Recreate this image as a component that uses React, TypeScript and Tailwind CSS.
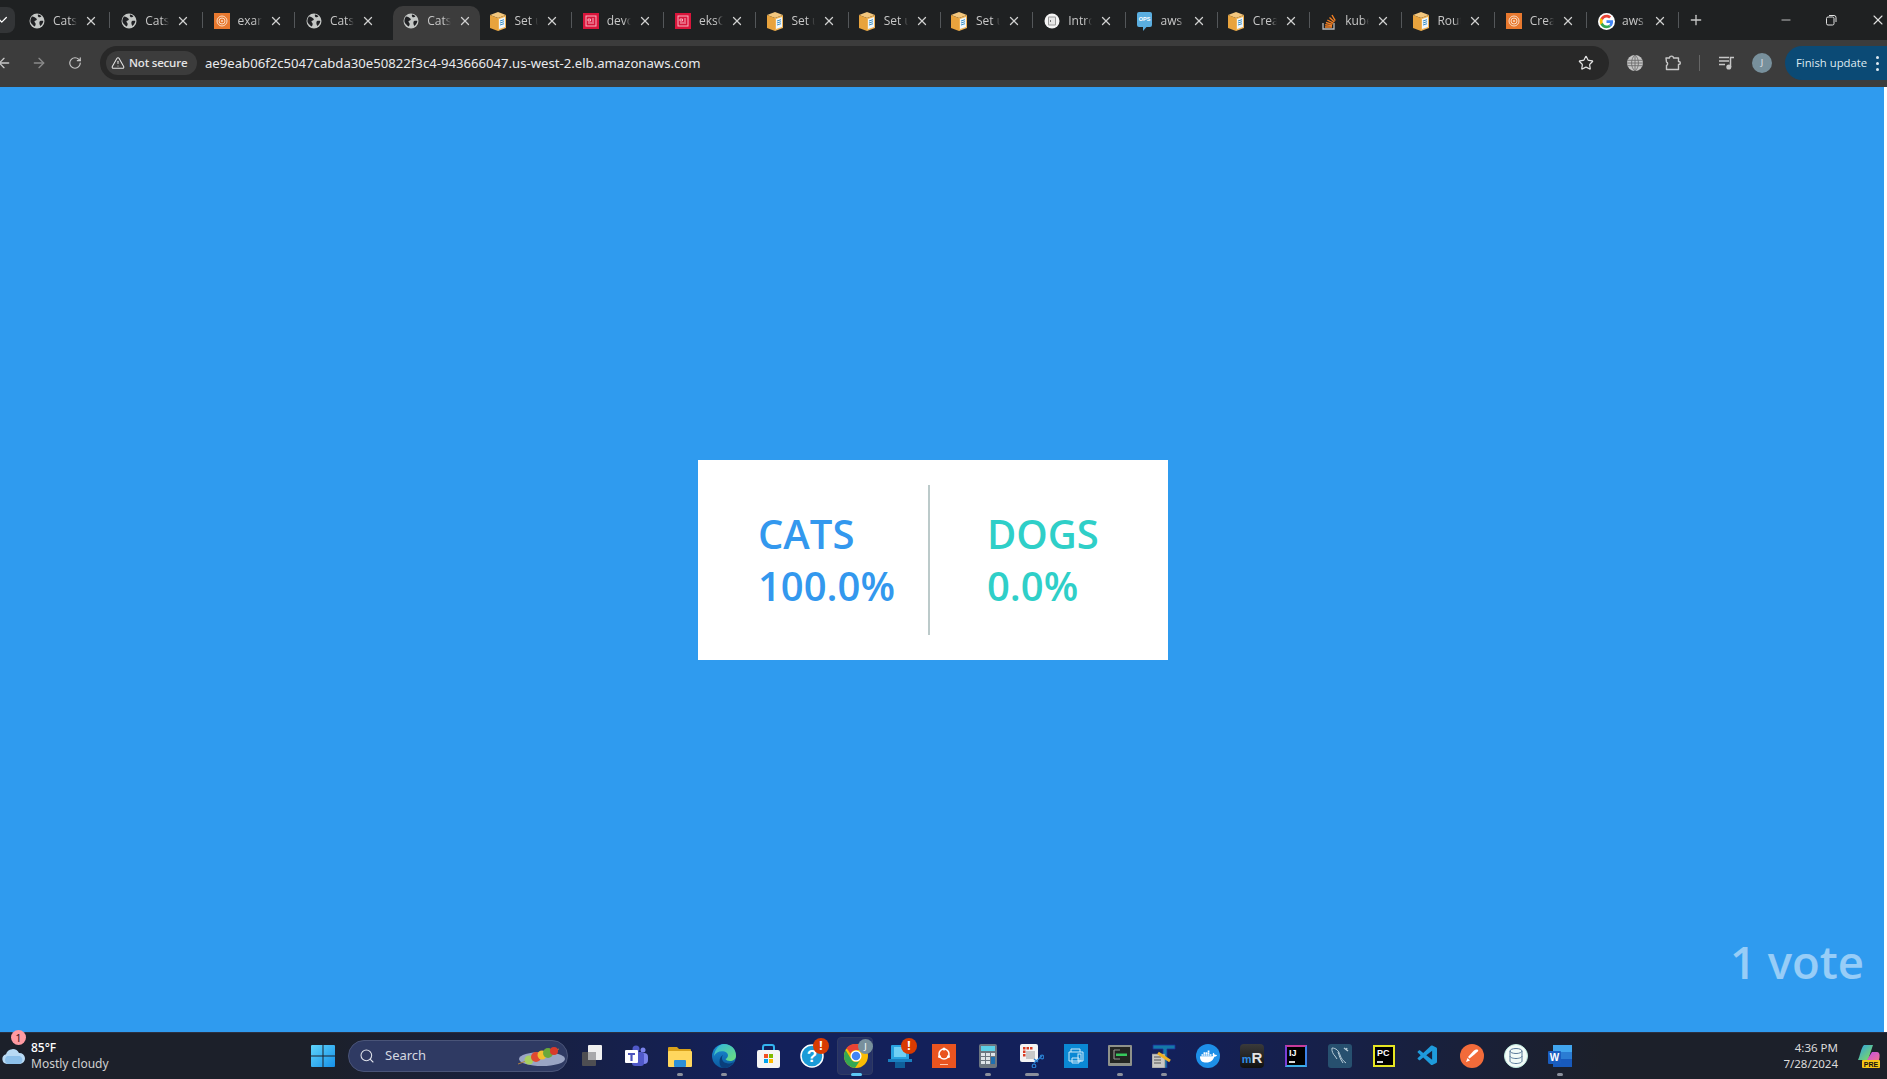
import React from "react";
import { ArrowLeft, ArrowRight, RotateCw, TriangleAlert, Star, Minus, Plus, X, Search, Check } from "lucide-react";
import { SiDocker } from "react-icons/si";
import { VscVscode } from "react-icons/vsc";

const GlobeFav = () => (
  <svg width="16" height="16" viewBox="0 0 16 16">
    <circle cx="8" cy="8" r="7.500" fill="#c4c7c5" />
    <path d="M3 3.500c2 .3 3.500 1 4.600 2.300.8 1-.4 1.800-1.500 2-1 .2-.6 1.500.2 2.200.8.8.3 2-.5 3.600-1.700-1.200-3.400-2.600-4.300-4.600C1.200 7 1.800 5 3 3.500z" fill="#202124" />
    <path d="M9 1.500c1.300.2 2.500.8 3.400 1.700-.6 1-1.800 1.200-2.600 1-.8-.3-1.200-1.500-.8-2.700zM11 8c1.200-.5 2.500-.5 3.300 0-.2 2-1.300 3.800-3 4.900-.8-1-1.500-3.800-.3-4.900z" fill="#202124" />
  </svg>
);
const BoxFav = () => (
  <svg width="17" height="20" viewBox="0 0 17 20">
    <polygon points="0,4 8,1 16,4 8,7" fill="#f3c77e" />
    <polygon points="0,4 8,7 8,20 0,17" fill="#e8a33d" />
    <polygon points="8,7 16,4 16,17 8,20" fill="#f1b354" />
    <polygon points="9,8 15,6 15,16 9,18" fill="#eef6fb" />
    <path d="M10 10l4-1.300M10 12l4-1.300M10 14l4-1.300" stroke="#3c8fc4" strokeWidth="1" />
  </svg>
);
const SwirlFav = () => (
  <svg width="16" height="16" viewBox="0 0 16 16">
    <rect width="16" height="16" fill="#e8792f" />
    <circle cx="8" cy="8" r="5" fill="none" stroke="#fbdcc4" strokeWidth="1" />
    <circle cx="8" cy="8" r="3" fill="none" stroke="#fbdcc4" strokeWidth="1" />
    <circle cx="8" cy="8" r="1" fill="#fbdcc4" />
  </svg>
);
const RedFav = () => (
  <svg width="16" height="16" viewBox="0 0 16 16">
    <rect width="16" height="16" fill="#d9153b" />
    <rect x="3" y="3" width="10" height="10" fill="none" stroke="#f7b5c2" strokeWidth="1" />
    <path d="M5 6h2.500v2H5zM9 6h2M9 8h2M5 10h6" stroke="#f7b5c2" strokeWidth="1" fill="none" />
  </svg>
);
const IntroFav = () => (
  <svg width="16" height="16" viewBox="0 0 16 16">
    <circle cx="8" cy="8" r="7.500" fill="#f4f4f4" />
    <rect x="4" y="3.500" width="8" height="9" rx="1" fill="#9a9a9a" />
    <rect x="5" y="4.500" width="6" height="7" fill="#e8e8e8" />
    <path d="M6 7l1 1-1 1" stroke="#555" strokeWidth=".8" fill="none" />
  </svg>
);
const OpsFav = () => (
  <svg width="15" height="19" viewBox="0 0 15 19">
    <path d="M2 0h11a2 2 0 0 1 2 2v11a2 2 0 0 1-2 2H9.500L6 19v-4H2a2 2 0 0 1-2-2V2a2 2 0 0 1 2-2z" fill="#5aaee0" />
    <text x="7.500" y="9" textAnchor="middle" fontSize="5.500" fontWeight="700" fill="#fff" fontFamily="'Liberation Sans',sans-serif">OPS</text>
  </svg>
);
const StackFav = () => (
  <svg width="16" height="18" viewBox="0 0 16 18">
    <path d="M2 11v6h11v-6" fill="none" stroke="#bcbbbb" strokeWidth="1.300" />
    <path d="M4 15h7M4.200 12.800l6.800.8M4.900 10.500l6.600 1.900M6.300 8l6 3.200M8.500 5.500l4.900 4.500M11 3l3.200 5.600" stroke="#f48024" strokeWidth="1.400" />
  </svg>
);
const GoogleFav = () => (
  <svg width="17" height="17" viewBox="0 0 48 48">
    <circle cx="24" cy="24" r="24" fill="#fff" />
    <path fill="#EA4335" d="M24 12.500c3 0 5.500 1 7.500 2.900l5.500-5.500C33.700 6.800 29.300 5 24 5 16.600 5 10.200 9.200 7.100 15.400l6.500 5C15.100 15.800 19.200 12.500 24 12.500z" />
    <path fill="#4285F4" d="M42.500 24.500c0-1.300-.1-2.500-.3-3.800H24v7.200h10.400c-.5 2.400-1.800 4.400-3.800 5.700l6 4.700c3.500-3.200 5.900-8 5.900-13.800z" />
    <path fill="#FBBC05" d="M13.600 28.600c-.5-1.400-.7-3-.7-4.600s.3-3.200.7-4.600l-6.500-5C5.800 17 5 20.400 5 24s.8 7 2.100 9.600l6.500-5z" />
    <path fill="#34A853" d="M24 43c5.200 0 9.500-1.700 12.600-4.700l-6-4.700c-1.700 1.100-3.900 1.800-6.600 1.800-4.800 0-8.900-3.300-10.400-7.700l-6.500 5C10.200 38.800 16.600 43 24 43z" />
  </svg>
);

type T = { icon: React.ReactNode; title: string; active?: boolean };
const tabs: T[] = [
  { icon: <GlobeFav />, title: "Cats" },
  { icon: <GlobeFav />, title: "Cats" },
  { icon: <SwirlFav />, title: "example" },
  { icon: <GlobeFav />, title: "Cats" },
  { icon: <GlobeFav />, title: "Cats", active: true },
  { icon: <BoxFav />, title: "Set up" },
  { icon: <RedFav />, title: "devops" },
  { icon: <RedFav />, title: "eksCtl" },
  { icon: <BoxFav />, title: "Set up" },
  { icon: <BoxFav />, title: "Set up" },
  { icon: <BoxFav />, title: "Set up" },
  { icon: <IntroFav />, title: "Introduction" },
  { icon: <OpsFav />, title: "aws eks" },
  { icon: <BoxFav />, title: "Create" },
  { icon: <StackFav />, title: "kubectl" },
  { icon: <BoxFav />, title: "Route" },
  { icon: <SwirlFav />, title: "Create" },
  { icon: <GoogleFav />, title: "aws eks" },
];

function Tab({ t, showSep }: { t: T; showSep: boolean }) {
  return (
    <div className={t.active ? "relative ml-[5px] flex h-[34px] w-[87.3px] shrink-0 items-center rounded-t-[10px] bg-[#3c3c3c] pb-[4px]" : "relative flex h-[34px] w-[92.3px] shrink-0 items-center pb-[4px]"}>
      <div className="flex w-[34px] shrink-0 items-center justify-center pl-[2px]">{t.icon}</div>
      <span className="w-[24px] shrink-0 overflow-hidden whitespace-nowrap text-[12px] leading-[16px] text-[#c7c7c7] [mask-image:linear-gradient(to_right,black_70%,transparent)]">{t.title}</span>
      <X className="ml-[7px] shrink-0 text-[#d0d0d0]" size={14} strokeWidth={2.2} />
      {showSep && <div className="absolute right-[1px] top-[6px] h-[16px] w-px bg-[#54575a]" />}
    </div>
  );
}

const Box = ({ children, dot, wide, active }: { children: React.ReactNode; dot?: boolean; wide?: boolean; active?: boolean }) => (
  <div className="relative flex h-[46px] w-[44px] shrink-0 items-center justify-center">
    {active && <div className="absolute left-[3px] top-[4px] h-[38px] w-[36px] rounded-[4px] border border-[#2f3a63] bg-[#ffffff14]" />}
    <div className="relative flex items-center justify-center">{children}</div>
    {dot && <div className={active ? "absolute bottom-[3px] h-[3px] w-[11px] rounded-full bg-[#5cc7f5]" : wide ? "absolute bottom-[3px] h-[3px] w-[14px] rounded-full bg-[#8b8f9c]" : "absolute bottom-[3px] h-[3px] w-[6px] rounded-full bg-[#8b8f9c]"} />}
  </div>
);

const Alert = () => (
  <div className="absolute right-[-5px] top-[-6px] flex h-[16px] w-[16px] items-center justify-center rounded-full bg-[#d83b01] text-[12px] font-bold leading-none text-white">!</div>
);

export default function App() {
  return (
    <div className="flex h-screen w-full flex-col overflow-hidden bg-white font-['Open_Sans','Noto_Sans',sans-serif]">
      {/* tab strip */}
      <div className="flex h-[40px] shrink-0 items-end bg-[#1f2122]">
        <div className="mb-[7px] flex h-[26px] w-[15px] shrink-0 items-center justify-start overflow-hidden rounded-r-[8px] bg-[#333537]">
          <Check size={10} strokeWidth={3} className="ml-[-2px] shrink-0 text-white" />
        </div>
        <div className="ml-[4px] flex">
          {tabs.map((t, i) => (
            <Tab key={i} t={t} showSep={!t.active && !(tabs[i + 1] && tabs[i + 1].active)} />
          ))}
        </div>
        <div className="mb-[9px] ml-[8px] flex h-[22px] items-center">
          <Plus size={16} strokeWidth={2} className="text-[#c7c7c7]" />
        </div>
        <div className="mb-[9px] ml-auto flex h-[22px] shrink-0 items-center text-[#e0e0e0]">
          <Minus size={14} strokeWidth={1.4} className="shrink-0" />
          <svg className="ml-[32px] shrink-0" width="12" height="12" viewBox="0 0 12 12" fill="none" stroke="currentColor" strokeWidth="1">
            <rect x="1.500" y="3" width="7.500" height="8" rx="1.500" />
            <path d="M4 1.500h5a2 2 0 0 1 2 2V8" />
          </svg>
          <X className="ml-[33px] mr-[1px] shrink-0" size={16} strokeWidth={1.6} />
        </div>
      </div>

      {/* toolbar */}
      <div className="flex h-[47px] shrink-0 items-center bg-[#3c3c3c] pb-[1px] text-[#c7c7c7]">
        <ArrowLeft size={16} strokeWidth={2} className="ml-[-4px] shrink-0" />
        <ArrowRight size={16} strokeWidth={2} className="ml-[19px] shrink-0 text-[#8a8a8a]" />
        <RotateCw size={14} strokeWidth={2} className="ml-[21px] shrink-0" />
        <div className="ml-[18px] flex h-[34px] w-[1509px] shrink-0 items-center rounded-full bg-[#282828] pl-[6px]">
          <div className="flex h-[24px] w-[91px] shrink-0 items-center rounded-full bg-[#3c3c3c] pl-[5px]">
            <TriangleAlert size={14} strokeWidth={1.8} className="shrink-0 text-[#e3e3e3]" />
            <span className="ml-[4px] whitespace-nowrap text-[11.500px] font-semibold tracking-[-0.2px] text-[#e3e3e3]">Not secure</span>
          </div>
          <span className="ml-[8px] whitespace-nowrap pt-[1px] font-['Noto_Sans',sans-serif] text-[13.150px] text-[#e8eaed]">ae9eab06f2c5047cabda30e50822f3c4-943666047.us-west-2.elb.amazonaws.com</span>
          <Star size={16} strokeWidth={1.8} className="ml-auto mr-[15px] shrink-0 text-[#e3e3e3]" />
        </div>
        <svg className="ml-[18px] shrink-0" width="16" height="16" viewBox="0 0 16 16">
          <circle cx="8" cy="8" r="8" fill="#c4c4c4" />
          <path d="M0 5.300h16M0 8h16M0 10.700h16M8 0v16M8 0C5.500 2 4.600 5 4.600 8s.9 6 3.400 8M8 0c2.500 2 3.400 5 3.400 8s-.9 6-3.400 8" stroke="#6e6e6e" strokeWidth=".9" fill="none" />
        </svg>
        <svg className="ml-[22px] shrink-0" width="17" height="16" viewBox="0 0 17 16" fill="none" stroke="#c7c7c7" strokeWidth="1.400" strokeLinejoin="round">
          <path d="M1 3h3.500c0-2.500 4-2.500 4 0H13.500v3.500c2.500 0 2.500 3 0 3V14.500H1.500V10.500c1.500-.5 1.500-3 0-3.500z" />
        </svg>
        <div className="ml-[17px] h-[16px] w-px shrink-0 bg-[#666]" />
        <svg className="ml-[19px] shrink-0" width="16" height="14" viewBox="0 0 16 14" fill="none" stroke="#c7c7c7" strokeWidth="1.500">
          <path d="M0 1.500h10M0 5h10M0 8.500h6" />
          <path d="M11.500 11V1.500H15" />
          <circle cx="9.800" cy="11" r="1.800" fill="#c7c7c7" />
        </svg>
        <div className="ml-[17px] flex h-[20px] w-[20px] shrink-0 items-center justify-center rounded-full bg-[#78909c] text-[9px] text-[#e8eaed]">J</div>
        <div className="ml-[13px] flex h-[34px] flex-1 items-center rounded-l-full bg-[#0b4a75] pl-[11px] text-[#dfeaf2]">
          <span className="whitespace-nowrap text-[11.300px]">Finish update</span>
          <div className="ml-[9px] flex flex-col gap-[3px]">
            <div className="h-[3px] w-[3px] rounded-full bg-[#dfeaf2]" />
            <div className="h-[3px] w-[3px] rounded-full bg-[#dfeaf2]" />
            <div className="h-[3px] w-[3px] rounded-full bg-[#dfeaf2]" />
          </div>
        </div>
      </div>

      {/* page */}
      <div className="flex min-h-0 flex-1">
        <main className="relative flex flex-1 items-center justify-center bg-[#2f9bef] pr-[18px]">
          <div className="flex h-[200px] w-[470px] items-center bg-white font-semibold">
            <div className="h-[150px] w-[232px] shrink-0 border-r-2 border-[#bccaca] pl-[60px] pt-[23px] text-[40px] leading-[52px] text-[#3398ee]">
              <div>CATS</div>
              <div>100.0%</div>
            </div>
            <div className="h-[150px] flex-1 pl-[57px] pt-[23px] text-[40px] leading-[52px] text-[#2fcfc8]">
              <div>DOGS</div>
              <div>0.0%</div>
            </div>
          </div>
          <div className="absolute bottom-[39px] right-[20px] text-[45.500px] font-semibold leading-[64px] text-white/50">1 vote</div>
        </main>
        <div className="w-[3px] shrink-0 bg-white" />
      </div>

      {/* taskbar */}
      <div className="flex h-[47px] shrink-0 items-center border-t border-[#2c3040] bg-[linear-gradient(to_right,#1c202a_0%,#1c202a_17%,#13205a_40%,#13205a_62%,#1c202a_85%,#1c202a_100%)] font-['Noto_Sans',sans-serif]">
        <div className="relative flex w-[301px] shrink-0 items-center">
          <svg className="ml-[1px] shrink-0" width="25" height="18" viewBox="0 0 25 18">
            <path d="M6 17a5 5 0 0 1-1-9.800A7 7 0 0 1 18 6a5.500 5.500 0 0 1 1 11z" fill="#b9daf4" />
            <path d="M6 17a5 5 0 0 1 0-8h13a4.500 4.500 0 0 1 0 8z" fill="#8dc0ea" />
          </svg>
          <div className="absolute left-[11px] top-[-10px] flex h-[15px] w-[15px] items-center justify-center rounded-full bg-[#ff9aa2] text-[11px] leading-none text-[#3a1518]">1</div>
          <div className="ml-[5px] leading-[16px]">
            <div className="text-[12px] font-medium text-white">85°F</div>
            <div className="text-[12px] text-[#d0d0d0]">Mostly cloudy</div>
          </div>
        </div>
        {/* start */}
        <Box>
          <svg width="24" height="24" viewBox="0 0 24 24">
            <defs>
              <linearGradient id="w" x1="0" y1="0" x2="1" y2="1">
                <stop offset="0" stopColor="#5fd4fb" />
                <stop offset="1" stopColor="#1590e8" />
              </linearGradient>
            </defs>
            <path d="M1 1h10.500v10.500H0V2a1 1 0 0 1 1-1zM12.500 1H23a1 1 0 0 1 1 1v9.500H12.500zM0 12.500h11.500V23H1a1 1 0 0 1-1-1zM12.500 12.500H24V22a1 1 0 0 1-1 1H12.500z" fill="url(#w)" />
          </svg>
        </Box>
        <div className="ml-[3px] flex h-[32px] w-[220px] shrink-0 items-center rounded-full border border-[#4a5478] bg-[#2f3a63] pl-[10px]">
          <Search size={16} strokeWidth={1.6} className="shrink-0 text-[#dfe2ea]" />
          <span className="ml-[10px] text-[13px] text-[#d5d8e0]">Search</span>
          <svg className="ml-auto mr-[2px] shrink-0" width="50" height="24" viewBox="0 0 50 24">
            <ellipse cx="27" cy="15" rx="23" ry="7" fill="#9aa5c4" />
            <path d="M3 20L44 5" stroke="#b08040" strokeWidth="1" />
            <circle cx="14" cy="16" r="4.500" fill="#a8d060" />
            <circle cx="21" cy="13" r="5" fill="#e04a30" />
            <circle cx="27" cy="11" r="4.500" fill="#f0c030" />
            <circle cx="33" cy="9" r="5" fill="#6aa83a" />
            <circle cx="39" cy="7" r="4" fill="#d83a2a" />
          </svg>
        </div>
        <div className="ml-[2px] flex">
          <Box>
            <svg width="20" height="22" viewBox="0 0 20 22">
              <rect x="0" y="7" width="14" height="14" rx="1" fill="#4e4e52" />
              <rect x="6" y="0" width="14" height="15" rx="1" fill="#f0f0f0" />
              <rect x="6" y="7" width="8" height="8" fill="#a9a9ab" />
            </svg>
          </Box>
          <Box>
            <svg width="24" height="22" viewBox="0 0 24 22">
              <circle cx="19" cy="5" r="2.500" fill="#7b83eb" />
              <rect x="13" y="8" width="11" height="11" rx="4" fill="#7b83eb" />
              <circle cx="12" cy="4" r="3.500" fill="#5059c9" />
              <rect x="8" y="7" width="12" height="14" rx="3" fill="#5059c9" />
              <rect x="1" y="5" width="13" height="13" rx="1" fill="#fff" />
              <path d="M4 8h7v2H8.600v6H6.400v-6H4z" fill="#4b53bc" />
            </svg>
          </Box>
          <Box dot>
            <svg width="24" height="21" viewBox="0 0 24 21">
              <path d="M0 2a1 1 0 0 1 1-1h8l2 2h11a1 1 0 0 1 1 1v3H0z" fill="#d9a21b" />
              <rect x="0" y="5" width="24" height="16" rx="1" fill="#ffd75e" />
              <rect x="6" y="14" width="12" height="7" rx="1" fill="#2b8fd8" />
            </svg>
          </Box>
          <Box dot>
            <svg width="24" height="24" viewBox="0 0 24 24">
              <defs>
                <linearGradient id="e1" x1="0" y1="0" x2="0" y2="1">
                  <stop offset="0" stopColor="#1a8fd8" />
                  <stop offset="1" stopColor="#0c5a9e" />
                </linearGradient>
                <linearGradient id="e2" x1="0" y1="0" x2="1" y2="1">
                  <stop offset="0" stopColor="#2fb5e0" />
                  <stop offset="1" stopColor="#6fe07a" />
                </linearGradient>
              </defs>
              <circle cx="12" cy="12" r="12" fill="url(#e1)" />
              <path d="M12 0c7 0 12 5 12 11.500 0 4-3 5.500-6 5.500-2 0-4-.8-4.500-2 3-1 4-6-1-7.500C8 6.500 4 8 2 12 3 5 7 0 12 0z" fill="url(#e2)" />
              <path d="M11 11c-2.500 3-.5 8 5 8.500 2 .2 4.500-.5 6-2-2 4-6 6.500-10 6.500-3 0-4.500-3-4.500-6.500 0-3 1.500-5.500 3.500-6.500z" fill="#0a3f7c" />
            </svg>
          </Box>
          <Box>
            <svg width="23" height="24" viewBox="0 0 23 24">
              <path d="M6 7V3a2 2 0 0 1 2-2h7a2 2 0 0 1 2 2v4" fill="none" stroke="#33b5f0" strokeWidth="2" />
              <rect x="0" y="6" width="23" height="18" rx="2" fill="#f5f5f5" />
              <rect x="7" y="10" width="4" height="4" fill="#f25022" />
              <rect x="12" y="10" width="4" height="4" fill="#7fba00" />
              <rect x="7" y="15" width="4" height="4" fill="#00a4ef" />
              <rect x="12" y="15" width="4" height="4" fill="#ffb900" />
            </svg>
          </Box>
          <Box>
            <svg width="24" height="24" viewBox="0 0 24 24">
              <circle cx="12" cy="12" r="11" fill="#1b9bd7" stroke="#ffffff" strokeWidth="1.500" />
              <text x="12" y="18" textAnchor="middle" fontSize="17" fontWeight="700" fill="#fff" fontFamily="'Liberation Sans',sans-serif">?</text>
            </svg>
            <Alert />
          </Box>
          <Box dot active>
            <svg width="24" height="24" viewBox="0 0 48 48">
              <circle cx="24" cy="24" r="24" fill="#fbbc04" />
              <path d="M24 0a24 24 0 0 1 20.800 12H24a12 12 0 0 0-11 7.500L5 8a24 24 0 0 1 19-8z" fill="#ea4335" />
              <path d="M3.200 12A24 24 0 0 0 22 47.900L32 33a12 12 0 0 1-16 0z" fill="#34a853" />
              <circle cx="24" cy="24" r="11" fill="#fff" />
              <circle cx="24" cy="24" r="8.500" fill="#4285f4" />
            </svg>
            <div className="absolute right-[-5px] top-[-5px] flex h-[15px] w-[15px] items-center justify-center rounded-full bg-[#78909c] text-[9px] text-white">J</div>
          </Box>
          <Box>
            <svg width="24" height="24" viewBox="0 0 24 24">
              <rect x="3" y="1" width="18" height="15" rx="1" fill="#29a3e0" />
              <rect x="6" y="3" width="12" height="10" fill="#6fd0f5" />
              <rect x="0" y="15" width="24" height="3" fill="#1a7fc0" />
              <rect x="7" y="18" width="10" height="6" fill="#0f5f9a" />
            </svg>
            <Alert />
          </Box>
          <Box>
            <svg width="24" height="24" viewBox="0 0 24 24">
              <rect width="24" height="24" fill="#e95420" />
              <circle cx="12" cy="10" r="5" fill="none" stroke="#fff" strokeWidth="1.500" />
              <circle cx="12" cy="5" r="1.500" fill="#fff" />
              <circle cx="7.500" cy="12.500" r="1.500" fill="#fff" />
              <circle cx="16.500" cy="12.500" r="1.500" fill="#fff" />
              <rect x="8" y="20" width="8" height="1" fill="#ffc8b0" />
            </svg>
          </Box>
          <Box dot>
            <svg width="18" height="24" viewBox="0 0 18 24">
              <rect width="18" height="24" rx="2" fill="#6d7680" />
              <rect x="2" y="2" width="14" height="5" fill="#5cd0e6" />
              <path d="M2 9h4v3H2zM7 9h4v3H7zM2 13h4v3H2zM7 13h4v3H7zM2 17h4v3H2zM7 17h4v3H7z" fill="#dfe4e8" />
              <rect x="12" y="9" width="4" height="3" fill="#dfe4e8" />
              <rect x="12" y="13" width="4" height="7" fill="#1f6fb0" />
            </svg>
          </Box>
          <Box dot wide>
            <svg width="24" height="24" viewBox="0 0 24 24">
              <rect x="0" y="0" width="18" height="18" rx="2" fill="#f4f4f4" />
              <path d="M3 3h2.500v2.500H3zM6.500 3H9v2.500H6.500zM10 3h2.500v2.500H10zM3 6.500h2.500V9H3zM3 10h2.500v2.500H3z" fill="#d83b22" />
              <rect x="6" y="7" width="9" height="8" fill="#c8c8c8" />
              <path d="M14 15l4 3M14 19l8-7" stroke="#2a7fd0" strokeWidth="1.500" />
              <circle cx="22" cy="13" r="1.800" fill="none" stroke="#2a7fd0" strokeWidth="1.200" />
              <circle cx="14" cy="22" r="1.800" fill="none" stroke="#2a7fd0" strokeWidth="1.200" />
            </svg>
          </Box>
          <Box>
            <svg width="24" height="24" viewBox="0 0 24 24">
              <rect width="24" height="24" fill="#0a88d4" />
              <path d="M7 8V5h9v3M5 8h14v9H5zM8 14h7v5H8z" fill="none" stroke="#cfeaf8" strokeWidth="1" />
              <rect x="14" y="10" width="3" height="7" fill="none" stroke="#cfeaf8" strokeWidth="1" />
            </svg>
          </Box>
          <Box dot>
            <svg width="24" height="22" viewBox="0 0 24 22">
              <rect width="24" height="21" rx="1" fill="#8f928a" />
              <rect x="2" y="2" width="20" height="16" fill="#232522" />
              <path d="M6 5h6M6 5v9M6 14h6" stroke="#8f928a" strokeWidth="1.200" fill="none" />
              <rect x="8" y="8.500" width="11" height="2.500" fill="#36c85c" />
            </svg>
          </Box>
          <Box dot>
            <svg width="24" height="24" viewBox="0 0 24 24">
              <path d="M1 1h22v4h-8v19H11V5H1z" fill="#1479a8" stroke="#1d2f9a" strokeWidth=".8" />
              <rect x="0" y="10" width="13" height="14" fill="#c8c8c4" stroke="#777" strokeWidth=".6" />
              <path d="M2 13h7M2 16h7M2 19h7" stroke="#555" strokeWidth="1" />
              <path d="M6 9l12 8" stroke="#f0b020" strokeWidth="3" />
            </svg>
          </Box>
          <Box>
            <div className="flex h-[24px] w-[24px] items-center justify-center rounded-full bg-[#1d8fe8]">
              <SiDocker size={17} color="#ffffff" />
            </div>
          </Box>
          <Box>
            <div className="flex h-[24px] w-[24px] items-end justify-center rounded-[4px] bg-[linear-gradient(#3a3a3a,#111)] pb-[3px] font-['Liberation_Sans',sans-serif] text-[15px] font-bold leading-none">
              <span className="text-[11px] text-[#2f8fe8]">m</span>
              <span className="text-[#e4e4e4]">R</span>
            </div>
          </Box>
          <Box>
            <div className="relative h-[22px] w-[22px] border-2 bg-black pl-[2px] pt-[2px] font-['Liberation_Sans',sans-serif] text-[9px] font-bold leading-none text-white [border-color:#c83b9a_#3b82e8_#3bb0e8_#7a3fd8]">
              IJ
              <div className="absolute bottom-[2px] left-[2px] h-[2px] w-[6px] bg-[#d8d8d8]" />
            </div>
          </Box>
          <Box>
            <div className="flex h-[24px] w-[24px] items-center justify-center rounded-[3px] bg-[#27506f]">
              <svg width="20" height="20" viewBox="0 0 20 20" fill="none" stroke="#b8ccd8" strokeWidth="1">
                <path d="M2 2c4 0 7 3 8 7 1 3 3 6 6 8M2 2c-.5 3 1 6 3 8l2 3M8 6c1 3 2 7 5 11" />
                <path d="M14 2l4 3M17 2l-1 2" strokeWidth="1.400" />
              </svg>
            </div>
          </Box>
          <Box>
            <div className="relative h-[22px] w-[22px] border-2 border-[#e6e622] bg-black pl-[2px] pt-[2px] font-['Liberation_Sans',sans-serif] text-[9px] font-bold leading-none text-white">
              PC
              <div className="absolute bottom-[2px] left-[2px] h-[2px] w-[6px] bg-[#d8d8d8]" />
            </div>
          </Box>
          <Box>
            <VscVscode size={24} color="#1e9bdc" />
          </Box>
          <Box>
            <div className="flex h-[24px] w-[24px] items-center justify-center rounded-full bg-[#f26b3a]">
              <svg width="16" height="16" viewBox="0 0 16 16">
                <path d="M14 2c-1-1-3-.5-5 1.500L4 9l1.500 1.500L11 6c2-2 4-3 3-4zM3.500 10L2 14l4-1.500z" fill="#fff" />
              </svg>
            </div>
          </Box>
          <Box>
            <div className="flex h-[24px] w-[24px] items-center justify-center rounded-full border border-[#bfeadf] bg-[#f2fbf8]">
              <svg width="14" height="16" viewBox="0 0 14 16" fill="none" stroke="#5a7a9a" strokeWidth="1">
                <ellipse cx="7" cy="3" rx="6" ry="2.500" />
                <path d="M1 3v10c0 1.400 2.700 2.500 6 2.500s6-1.100 6-2.500V3M1 8c0 1.400 2.700 2.500 6 2.500s6-1.100 6-2.500" />
              </svg>
            </div>
          </Box>
          <Box dot>
            <svg width="24" height="22" viewBox="0 0 24 22">
              <rect x="5" y="0" width="19" height="22" rx="1" fill="#2b7cd3" />
              <rect x="5" y="0" width="19" height="7" fill="#41a5ee" />
              <rect x="5" y="14" width="19" height="8" fill="#185abd" />
              <rect x="0" y="6" width="13" height="13" rx="1" fill="#1a5dbf" />
              <text x="6.500" y="16" textAnchor="middle" fontSize="10" fontWeight="700" fill="#fff" fontFamily="'Liberation Sans',sans-serif">W</text>
            </svg>
          </Box>
        </div>
        <div className="ml-auto mr-[19px] text-right text-[11.500px] leading-[16px] text-[#dcdcdc]">
          <div>4:36 PM</div>
          <div>7/28/2024</div>
        </div>
        <svg className="mr-[6px] shrink-0" width="24" height="24" viewBox="0 0 24 24">
          <defs>
            <linearGradient id="c1" x1="0" y1="0" x2="1" y2="1">
              <stop offset="0" stopColor="#2aa0e8" />
              <stop offset="1" stopColor="#8adf50" />
            </linearGradient>
            <linearGradient id="c2" x1="0" y1="0" x2="1" y2="1">
              <stop offset="0" stopColor="#c050e8" />
              <stop offset="1" stopColor="#f07090" />
            </linearGradient>
          </defs>
          <path d="M7 1h9l-5 15H1C3 12 4 4 7 1z" fill="url(#c1)" />
          <path d="M15 8h5c3 0 3 4 2 8H10z" fill="url(#c2)" />
          <rect x="5" y="16" width="18" height="8" rx="1" fill="#f5c518" />
          <text x="14" y="22.500" textAnchor="middle" fontSize="7" fontWeight="700" fill="#111" fontFamily="'Liberation Sans',sans-serif">PRE</text>
        </svg>
      </div>
    </div>
  );
}
